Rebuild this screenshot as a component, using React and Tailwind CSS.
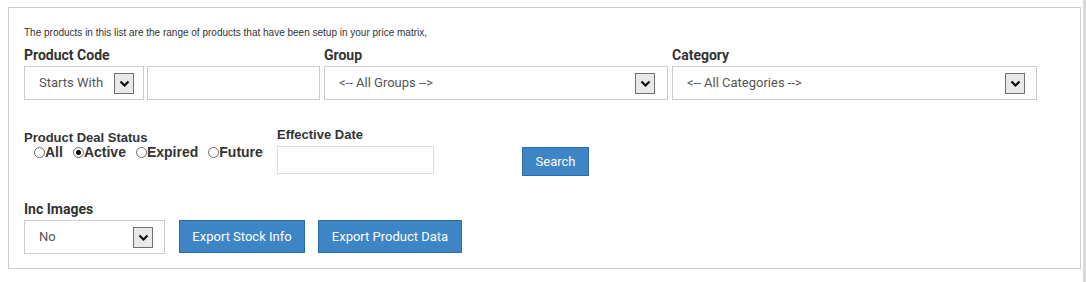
import React from 'react';

const Chevron = () => (
  <span className="flex items-center justify-center w-[20px] h-[21px] border border-[#707070] bg-[#e9e9e9]">
    <svg width="11" height="7" viewBox="0 0 11 7">
      <polyline points="1.5,1.5 5.5,5.5 9.5,1.5" fill="none" stroke="#111" strokeWidth="2.2" />
    </svg>
  </span>
);

const SelectBox = ({ text, width, right }) => (
  <div
    className={`flex items-center justify-between h-[34px] border border-[#cccccc] bg-white pl-[14px] ${width} ${right}`}
  >
    <span className="text-[13px] text-[#555] font-['Roboto',sans-serif]">{text}</span>
    <Chevron />
  </div>
);

const Radio = ({ label, checked }) => (
  <span className="flex items-center">
    <span className="flex items-center justify-center w-[11px] h-[11px] rounded-full border border-[#6a6a6a] bg-white">
      {checked && <span className="w-[5px] h-[5px] rounded-full bg-black" />}
    </span>
    <span>{label}</span>
  </span>
);

const Label = ({ children, arial }) => (
  <div
    className={`font-bold text-[#333] ${
      arial
        ? "text-[13px] font-['Liberation_Sans',sans-serif] leading-[14px]"
        : "text-[14px] font-['Roboto',sans-serif] leading-[16px]"
    }`}
  >
    {children}
  </div>
);

const Button = ({ children, width, height }) => (
  <button
    className={`${width} ${height} bg-[#3e85c6] border border-[#2c6aa5] text-white text-[13px] font-['Roboto',sans-serif]`}
  >
    {children}
  </button>
);

export default function App() {
  return (
    <div className="flex w-[1086px] h-[282px] bg-white">
      <div className="flex-1">
        <div className="ml-[8px] mt-[7px] w-[1073px] h-[262px] border border-[#cccccc] pl-[15px] pt-[19px]">
          <div className="text-[10px] leading-[12px] text-[#333] font-['Liberation_Sans',sans-serif]">
            The products in this list are the range of products that have been setup in your price matrix,
          </div>

          <div className="flex mt-[8px]">
            <div className="w-[300px]">
              <Label>Product Code</Label>
              <div className="flex mt-[3px]">
                <SelectBox text="Starts With" width="w-[120px]" right="pr-[9px]" />
                <div className="ml-[3px] w-[173px] h-[34px] border border-[#cccccc] bg-white" />
              </div>
            </div>
            <div className="w-[348px]">
              <Label>Group</Label>
              <div className="mt-[3px]">
                <SelectBox text="<-- All Groups -->" width="w-[344px]" right="pr-[12px]" />
              </div>
            </div>
            <div>
              <Label>Category</Label>
              <div className="mt-[3px]">
                <SelectBox text="<-- All Categories -->" width="w-[365px]" right="pr-[11px]" />
              </div>
            </div>
          </div>

          <div className="flex items-start mt-[28px]">
            <div className="w-[253px] mt-[3px]">
              <Label arial>Product Deal Status</Label>
              <div className="flex gap-[10px] ml-[10px] text-[14px] leading-[15px] font-bold text-[#333] font-['Liberation_Sans',sans-serif]">
                <Radio label="All" />
                <Radio label="Active" checked />
                <Radio label="Expired" />
                <Radio label="Future" />
              </div>
            </div>
            <div className="w-[245px]">
              <Label arial>Effective Date</Label>
              <div className="mt-[4px] w-[157px] h-[28px] border border-[#dddddd] bg-white" />
            </div>
            <div className="mt-[19px]">
              <Button width="w-[67px]" height="h-[29px]">Search</Button>
            </div>
          </div>

          <div className="mt-[25px]">
            <Label>Inc Images</Label>
            <div className="flex items-start mt-[3px]">
              <SelectBox text="No" width="w-[141px]" right="pr-[11px]" />
              <div className="ml-[14px]">
                <Button width="w-[126px]" height="h-[33px]">Export Stock Info</Button>
              </div>
              <div className="ml-[13px]">
                <Button width="w-[144px]" height="h-[33px]">Export Product Data</Button>
              </div>
            </div>
          </div>
        </div>
      </div>
      <div className="w-[3px] h-[282px] bg-[#d9d9d9]" />
    </div>
  );
}
